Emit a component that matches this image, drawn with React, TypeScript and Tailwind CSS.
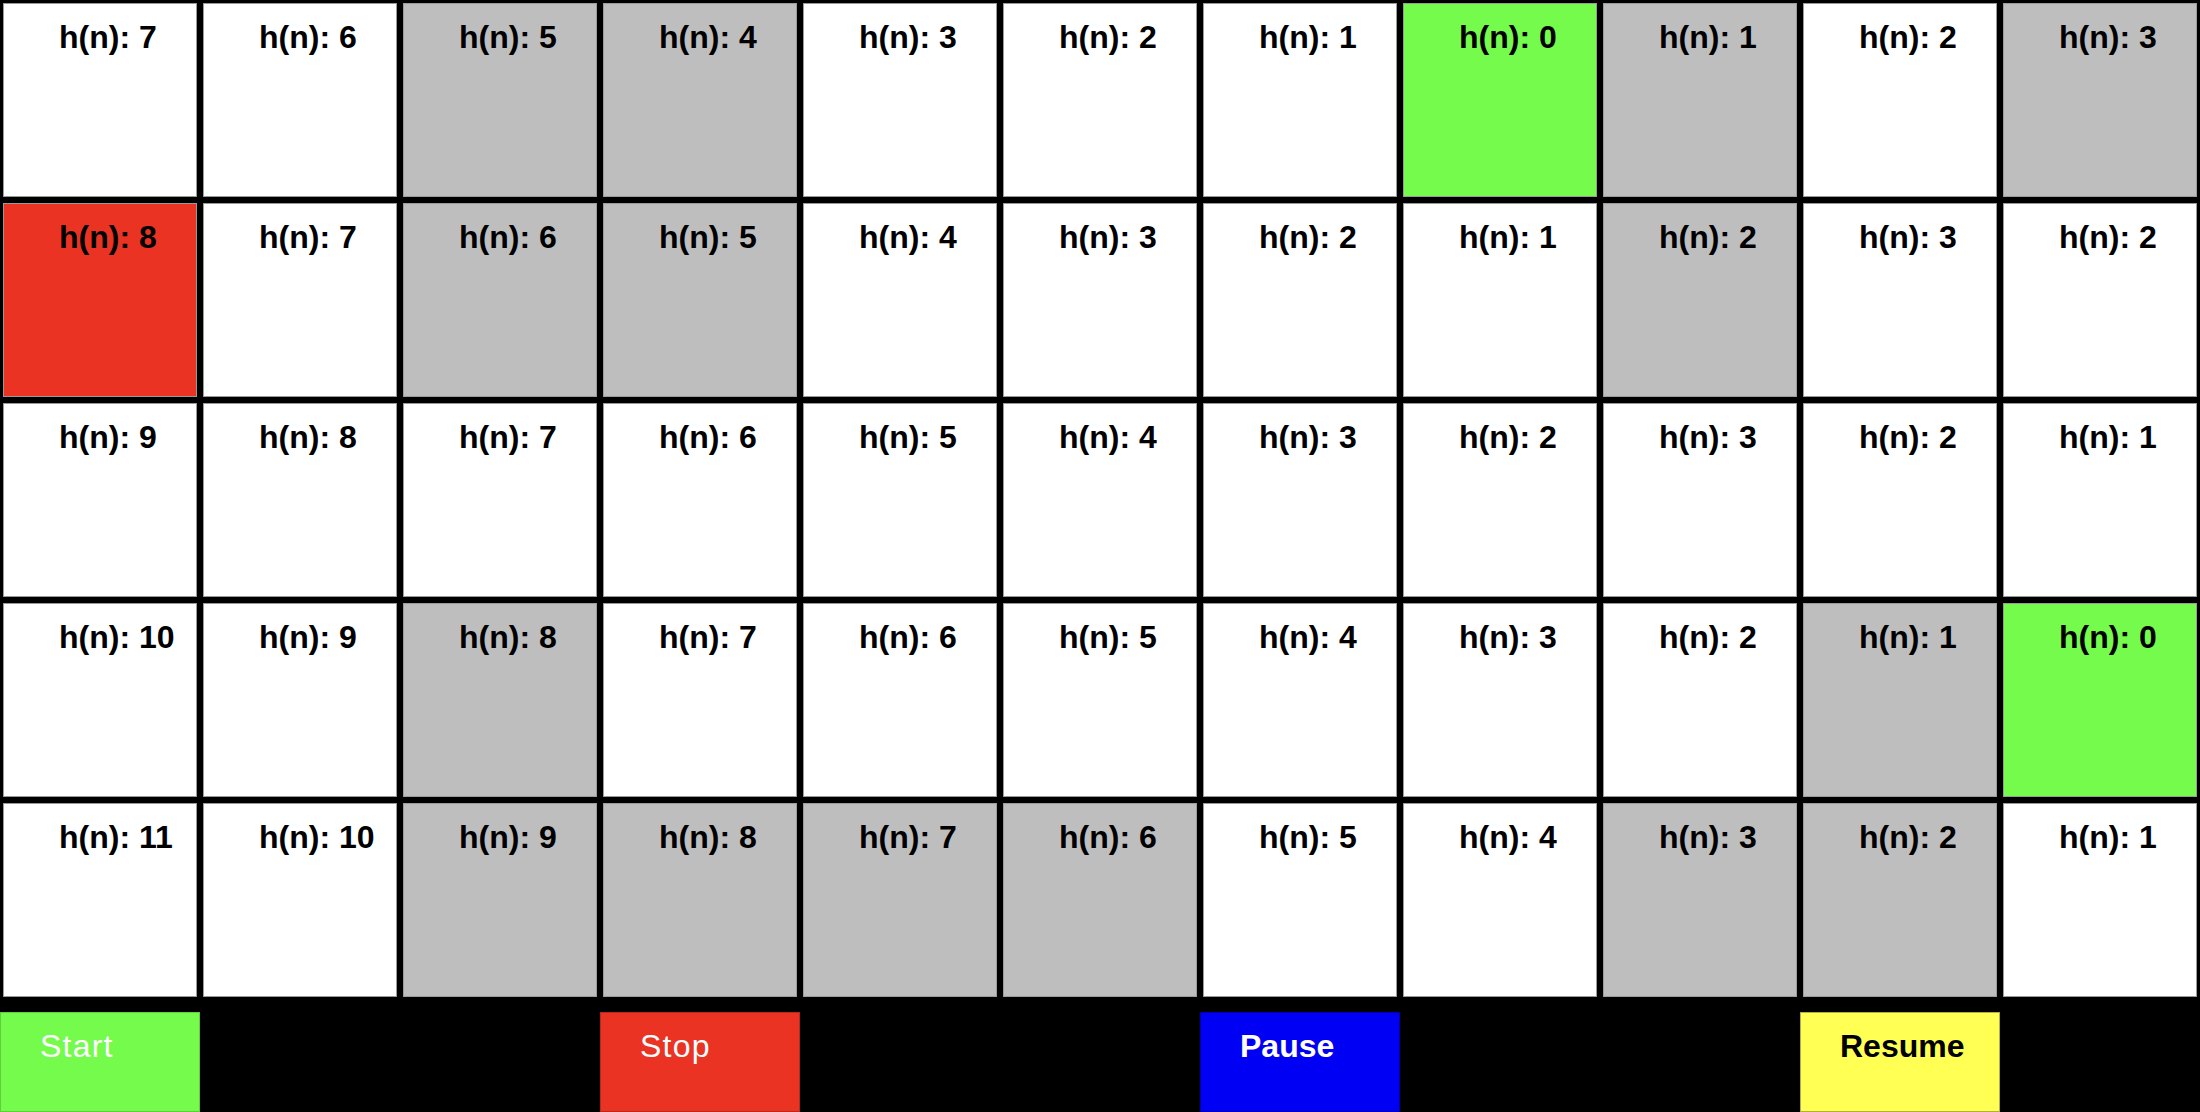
import React from 'react';

type Kind = 'open' | 'wall' | 'start' | 'goal';

// h(n) per cell, row by row; w = wall, s = start, g = goal
const ROWS: string[][] = [
  ['7', '6', '5w', '4w', '3', '2', '1', '0g', '1w', '2', '3w'],
  ['8s', '7', '6w', '5w', '4', '3', '2', '1', '2w', '3', '2'],
  ['9', '8', '7', '6', '5', '4', '3', '2', '3', '2', '1'],
  ['10', '9', '8w', '7', '6', '5', '4', '3', '2', '1w', '0g'],
  ['11', '10', '9w', '8w', '7w', '6w', '5', '4', '3w', '2w', '1'],
];

function parse(v: string): { h: string; kind: Kind } {
  if (v.endsWith('w')) return { h: v.slice(0, -1), kind: 'wall' };
  if (v.endsWith('s')) return { h: v.slice(0, -1), kind: 'start' };
  if (v.endsWith('g')) return { h: v.slice(0, -1), kind: 'goal' };
  return { h: v, kind: 'open' };
}

const bgFor: Record<Kind, string> = {
  open: 'bg-white',
  wall: 'bg-[#bebebe]',
  start: 'bg-[#ea3323]',
  goal: 'bg-[#75fb4c]',
};

function Cell({ h, kind }: { h: string; kind: Kind }) {
  return (
    <div className="w-[200px] h-[200px] border-[3px] border-black">
      <div className={`h-full border border-[#9a9a9a] ${bgFor[kind]} pl-[55px] pt-[15px]`}>
        <span className="text-[32px] leading-[36px] font-bold text-black">h(n): {h}</span>
      </div>
    </div>
  );
}

export default function App() {
  return (
    <div className="w-[2200px] min-h-screen bg-black font-['Liberation_Sans',Arial,sans-serif]">
      {/* Grid */}
      <div className="grid grid-cols-[repeat(11,200px)]">
        {ROWS.map((row, r) =>
          row.map((v, c) => {
            const cell = parse(v);
            return <Cell key={`${r}-${c}`} h={cell.h} kind={cell.kind} />;
          })
        )}
      </div>

      {/* Controls */}
      <div className="mt-[12px] flex gap-[400px]">
        <button className="w-[200px] h-[100px] border border-[#5fcf3c] bg-[#75fb4c] text-left pl-[39px] pt-[15px] self-start flex">
          <span className="text-[32px] leading-[36px] font-normal tracking-[1.2px] text-white">Start</span>
        </button>
        <button className="w-[200px] h-[100px] border border-[#b8281b] bg-[#ea3323] text-left pl-[39px] pt-[15px] self-start flex">
          <span className="text-[32px] leading-[36px] font-normal tracking-[1.2px] text-white">Stop</span>
        </button>
        <button className="w-[200px] h-[100px] border border-[#0000b0] bg-[#0000f5] text-left pl-[39px] pt-[15px] self-start flex">
          <span className="text-[32px] leading-[36px] font-bold text-white">Pause</span>
        </button>
        <button className="w-[200px] h-[100px] border border-[#b0b040] bg-[#ffff54] text-left pl-[39px] pt-[15px] self-start flex">
          <span className="text-[32px] leading-[36px] font-bold text-black">Resume</span>
        </button>
      </div>
    </div>
  );
}
